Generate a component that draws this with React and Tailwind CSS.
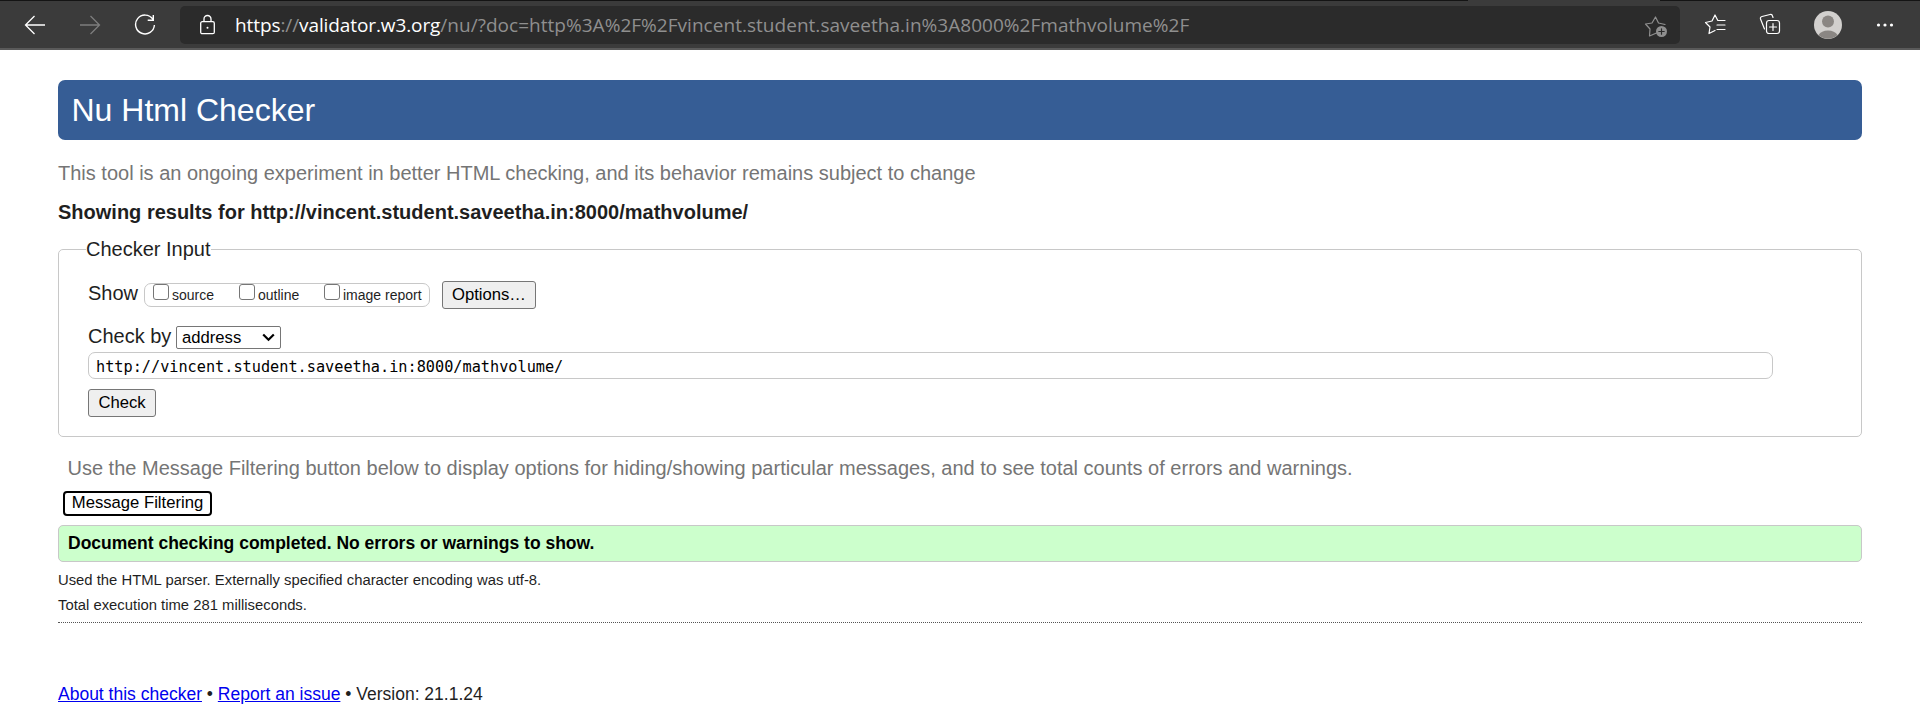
import React from 'react';

const ARIAL = "font-['Liberation_Sans',Arial,sans-serif]";

function Star({ children, className }) {
  return (
    <svg width="24" height="24" viewBox="0 0 24 24" fill="none" className={className} stroke="currentColor" strokeWidth="1.2" strokeLinejoin="round" strokeLinecap="round">
      {children}
    </svg>
  );
}

function Toolbar() {
  return (
    <header className="flex h-[50px] flex-col border-b-2 border-[#5a5a5a] bg-[#3b3b3b]">
      <div className="flex h-px w-full justify-between">
        <div className="h-px w-[1468px] bg-[#141414]" />
        <div className="h-px w-[260px] bg-[#141414]" />
      </div>
      <div className="flex h-[47px] w-full items-center text-white">
        <div className="flex w-[180px] shrink-0 items-center">
          <svg className="ml-6" width="22" height="22" viewBox="0 0 22 22" fill="none" stroke="currentColor" strokeWidth="1.3">
            <path d="M10.500 2 1.500 11 10.500 20M1.500 11H21" />
          </svg>
          <svg className="ml-[33px] text-[#7d7d7d]" width="22" height="22" viewBox="0 0 22 22" fill="none" stroke="currentColor" strokeWidth="1.3">
            <path d="M11.500 2 20.500 11 11.500 20M20.500 11H1" />
          </svg>
          <svg className="ml-[33px]" width="22" height="22" viewBox="0 0 22 22" fill="none" stroke="currentColor" strokeWidth="1.4">
            <path d="M18.800 5.200A9.400 9.400 0 1 0 20.400 11M19.300 1V6.300H13.700" />
          </svg>
        </div>
        <div className="flex h-[38px] w-[1500px] shrink-0 items-center rounded-[5px] bg-[#2b2b2b]">
          <svg className="ml-[19px] shrink-0" width="17" height="22" viewBox="0 0 17 22" fill="none" stroke="currentColor" strokeWidth="1.3">
            <rect x="1.700" y="7.700" width="13.600" height="12" rx="1.500" />
            <path d="M5 7.500V5a3.500 3.500 0 0 1 7 0v2.500" />
            <circle cx="8.500" cy="13.700" r="1" fill="currentColor" stroke="none" />
          </svg>
          <div className="ml-[19px] w-[1409px] shrink-0 whitespace-nowrap font-['Open_Sans',sans-serif] text-[19px] leading-[28px] tracking-[0.03px] text-[#8f8f8f]">
            <span className="tracking-[-0.1px]"><span className="text-white">https</span>://<span className="text-white">validator.w3.org</span></span>/nu/?doc=http%3A%2F%2Fvincent.student.saveetha.in%3A8000%2Fmathvolume%2F
          </div>
          <Star className="mt-[4px] shrink-0 text-[#8f8f8f]">
            <path d="M12.500 18 5.500 21 6 14 1.500 9 8 8 11.500 2 14.500 8 21 9.500" />
            <circle cx="17.500" cy="16.500" r="5.500" fill="currentColor" stroke="none" />
            <path d="M17.500 13.800v5.400M14.800 16.500h5.400" stroke="#2b2b2b" />
          </Star>
        </div>
        <Star className="ml-6 shrink-0">
          <path d="M11 17.500 5 20.500 6 14 1.500 9.500 8 8 11 2 13.800 7.500H21M13 12H21M13 16.500H21" />
        </Star>
        <Star className="ml-[31px] shrink-0">
          <path d="M5.500 16 1.500 6Q1 4 3 3.500L11 1.500Q13 1 13.500 3L14 4.500" />
          <rect x="7.500" y="7.500" width="13" height="13" rx="2.500" />
          <path d="M14 10.500v7M10.500 14h7" />
        </Star>
        <svg className="ml-[31px] shrink-0" width="28" height="28" viewBox="0 0 28 28">
          <circle cx="14" cy="14" r="14" fill="#d2d0ce" />
          <circle cx="14" cy="10.500" r="6" fill="#8a8683" />
          <path d="M4.500 24a10.500 8 0 0 1 19 0A14 14 0 0 1 4.500 24Z" fill="#8a8683" />
        </svg>
        <svg className="ml-[34px] shrink-0" width="18" height="6" viewBox="0 0 18 6" fill="currentColor">
          <circle cx="2.500" cy="3" r="1.600" /><circle cx="9" cy="3" r="1.600" /><circle cx="15.500" cy="3" r="1.600" />
        </svg>
      </div>
    </header>
  );
}

function ShowOption({ label, className }) {
  return (
    <label className={`flex items-start ${className}`}>
      <input type="checkbox" className="size-4 shrink-0 appearance-none rounded-[3px] border border-[#767676] bg-white" />
      <span className="ml-[3px] mt-[2px] whitespace-nowrap text-[14px] leading-[18px]">{label}</span>
    </label>
  );
}

export default function App() {
  return (
    <div className={`h-[717px] overflow-hidden bg-white text-[#1f1f1f] ${ARIAL}`}>
      <Toolbar />
      <main className="mx-[58px] pt-[30px]">
        <h1 className="flex h-[60px] items-center rounded-[7px] bg-[#365d95] pl-[13.5px] text-[32px] leading-[60px] text-white">Nu Html Checker</h1>
        <p className="mt-[21px] whitespace-nowrap text-[20px] leading-6 text-[#757575]">
          <span>This tool is an ongoing experiment in better HTML checking, and its behavior remains subject to change</span>
        </p>
        <h2 className="mt-[15px] whitespace-nowrap text-[20px] font-bold leading-6">
          <span>Showing results for http://vincent.student.saveetha.in:8000/mathvolume/</span>
        </h2>
        <fieldset className="mt-[13px] h-[200px] rounded-[5px] border border-[#c8c8c8] pl-[27px]">
          <legend className="h-6 whitespace-nowrap text-[20px] leading-6">Checker Input</legend>
          <div className="mt-[20px] flex h-7 items-start pl-[2px]">
            <span className="w-[56px] shrink-0 text-[20px] leading-6">Show</span>
            <div className="mt-[2px] flex h-6 w-[286px] shrink-0 rounded-[7px] border border-[#c8c8c8] pl-2">
              <ShowOption label="source" className="w-[86px]" />
              <ShowOption label="outline" className="w-[85px]" />
              <ShowOption label="image report" className="" />
            </div>
            <button className="ml-3 h-7 w-[94px] rounded-[3px] border border-[#767676] bg-[#efefef] pb-px text-[16.67px] leading-[25px] text-black">Options…</button>
          </div>
          <div className="mt-[17px] flex h-[23px] items-start pl-[2px]">
            <span className="w-[88px] shrink-0 whitespace-nowrap text-[20px] leading-[20px]">Check by</span>
            <div className="flex h-[23px] w-[105px] items-center justify-between rounded-[2px] border border-[#767676] pl-[5px] pr-[5px] text-[16.67px] leading-[21px] text-black">
              <span>address</span>
              <svg width="13" height="9" viewBox="0 0 13 9" fill="none" stroke="currentColor" strokeWidth="2.200"><path d="m1.200 1.500 5.300 5.200 5.300-5.200" /></svg>
            </div>
          </div>
          <div className="ml-[2px] mt-[3px] flex h-[27px] w-[1685px] items-center rounded-[7px] border border-[#c8c8c8] pl-[7px] pt-[3px] font-['DejaVu_Sans_Mono',monospace] text-[15.22px] leading-[22px] text-black">http://vincent.student.saveetha.in:8000/mathvolume/</div>
          <button className="ml-[2px] mt-[10px] block h-7 w-[68px] rounded-[3px] border border-[#767676] bg-[#efefef] pb-px text-[16.67px] leading-[25px] text-black">Check</button>
        </fieldset>
        <p className="mt-[19px] whitespace-nowrap pl-[9.5px] text-[20px] leading-6 text-[#757575]">
          <span>Use the Message Filtering button below to display options for hiding/showing particular messages, and to see total counts of errors and warnings.</span>
        </p>
        <button className="ml-[5px] mt-[11px] block h-[25px] w-[149px] whitespace-nowrap rounded-[4px] border-2 border-black bg-white pb-[2px] text-[16.67px] leading-[19px] text-black">Message Filtering</button>
        <div className="mt-[9px] flex h-[37px] items-center rounded-[5px] border border-[#c8c8c8] bg-[#ccffcc] pl-[9px] text-[17.5px] font-bold leading-[35px] text-black">
          <span>Document checking completed. No errors or warnings to show.</span>
        </div>
        <p className="mt-[8px] text-[14.83px] leading-5"><span>Used the HTML parser. Externally specified character encoding was utf-8.</span></p>
        <p className="mt-[5px] text-[14.83px] leading-5"><span>Total execution time 281 milliseconds.</span></p>
        <hr className="mt-[7px] border-t border-dotted border-[#555]" />
        <footer className="mt-[60px] whitespace-nowrap text-[17.5px] leading-[22px]">
          <a className="text-[#0000ee] underline">About this checker</a> • <a className="text-[#0000ee] underline">Report an issue</a> • Version: 21.1.24
        </footer>
      </main>
    </div>
  );
}
